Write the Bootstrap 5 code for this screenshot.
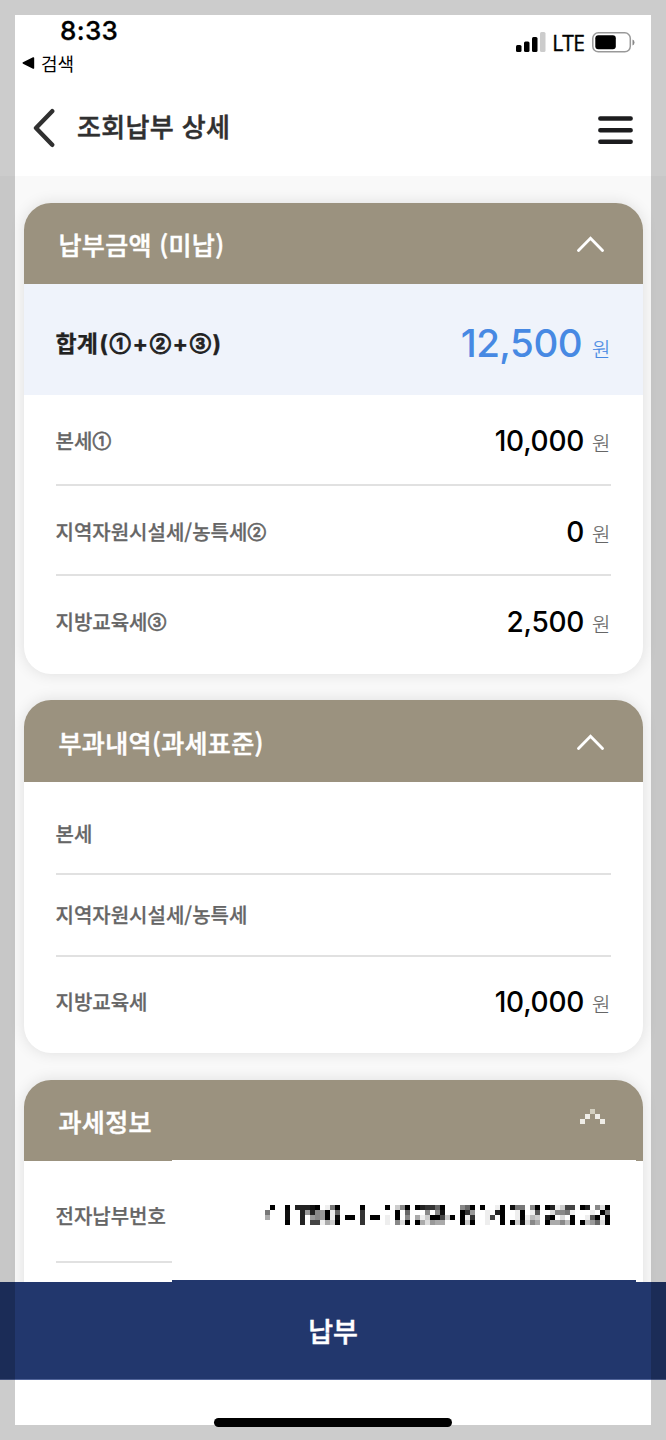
<!DOCTYPE html>
<html lang="ko">
<head>
<meta charset="utf-8">
<meta name="viewport" content="width=device-width, initial-scale=1">
<title>조회납부 상세</title>
<link href="https://cdn.jsdelivr.net/npm/bootstrap@5.3.0/dist/css/bootstrap.min.css" rel="stylesheet">
<style>
body{font-family:Inter,"Noto Sans CJK KR",sans-serif;background:#fff;color:#000;line-height:1}
.ko{font-family:"Noto Sans CJK KR",sans-serif}
.phone{width:666px;height:1440px}
.frame-edge{inset:0;border:15px solid rgba(0,0,0,.2);z-index:5;pointer-events:none}
.status{height:78px;padding:0 31px 0 22px}
.clock{font-size:26px;font-weight:500;letter-spacing:.35px;padding:18px 0 0 38px;line-height:26px;-webkit-text-stroke:.3px}
.back-app{font-size:18px;line-height:20px;padding-top:9px;gap:6px}
.signal{padding-top:32px}
.lte{font-size:21px;line-height:22px;letter-spacing:-.8px;font-family:"Open Sans",sans-serif;font-weight:500;-webkit-text-stroke:.4px;margin-left:6px}
.titlebar{height:98px;padding:2px 33px 0 33px}
.titlebar h1{font-size:26px;font-weight:500;color:#303030;line-height:30px;margin:0;padding:0 0 4px 22px;letter-spacing:.35px;-webkit-text-stroke:.5px}
.content-area{height:1106px;background:#f9f9f9;padding:26.5px 23.5px 0;overflow:hidden}
.tax-card{border:0;border-radius:27px;box-shadow:0 0 15px rgba(0,0,0,.11);margin-bottom:26.5px;background:#fff}
.tax-head{height:81.5px;background:#9b927f;color:#fff;border-radius:27px 27px 0 0;padding:1px 39px 0 35px}
.tax-head h2{font-size:25px;font-weight:500;line-height:30px;margin:0;letter-spacing:.35px;-webkit-text-stroke:.5px}
.sum-row{height:111px;background:#eff3fb;padding:7px 32px 0 32px}
.sum-row .label-txt{font-size:23px;font-weight:700;color:#222}
.sum-row .amount{font-size:38.5px;font-weight:500;color:#4789e3;letter-spacing:-.5px}
.sum-row .unit{color:#4789e3;margin-left:10px}
.rows{padding:0 32px 6px}
.line-row{height:90.3px;border-bottom:2px solid #e1e1e1}
.line-row:last-child{border-bottom:0}
.first-card .rows{padding-bottom:7.3px}
.first-card .line-row{padding-top:3px}
.first-card .line-row:first-child{height:91px}
.first-card .line-row:last-child{padding-top:1px}
.short-row{height:81.5px}
.pay-no{height:93.5px;padding-top:3px}
.label-txt{font-size:20px;font-weight:500;color:#666;line-height:26px;-webkit-text-stroke:.25px}
.formula{font-family:Inter,sans-serif;margin-left:1.5px}
.circled{font-family:Inter,sans-serif;font-size:13px;font-weight:600;line-height:0;vertical-align:2.8px;margin-left:.5px;-webkit-text-stroke:.6px}
.formula .circled{font-size:15px;font-weight:700;vertical-align:3px;margin:0 1.8px;-webkit-text-stroke:.8px}
.amount{font-size:28px;font-weight:500;letter-spacing:-.25px;line-height:1}
.unit{font-size:20px;font-weight:300;color:#666;margin-left:8px;-webkit-text-stroke:.2px}
.masked{left:148.5px;top:80px;width:464px;height:122px;background:#fff}
.masked svg{position:absolute;left:93px;top:45px}
.pay{height:98px;background:#22376d;color:#fff;font-size:27px;font-weight:500;border:0;border-radius:0;border-bottom:1px solid #52659a;padding:2px 0 0;-webkit-text-stroke:.5px}
.pay-lip{left:172px;top:-2px;width:464px;height:2px;background:#22376d}
.home-bar{width:238px;height:9px;border-radius:5px;background:#000;margin-top:37.5px}
</style>
</head>
<body>
<main class="phone position-relative overflow-hidden d-flex flex-column">
  <div class="status d-flex justify-content-between">
    <div>
      <div class="clock">8:33</div>
      <div class="back-app ko d-flex align-items-center">
        <svg width="13" height="12" viewBox="0 0 13 12"><path d="M1 5.3 11 .3q1.2-.4 1.2.8v9.8q0 1.2-1.2.8L1 6.7Q0 6 1 5.3z"/></svg>
        <span>검색</span>
      </div>
    </div>
    <div class="signal d-flex align-items-start">
      <svg width="30" height="21" viewBox="0 0 30 21"><rect x="0" y="13" width="5.5" height="7" rx="1.5"/><rect x="8" y="9.5" width="5.5" height="10.5" rx="1.5"/><rect x="16" y="5" width="5.5" height="15" rx="1.5"/><rect x="24" y="0" width="5.5" height="20" rx="1.5" fill="#ccc"/></svg>
      <span class="lte">LTE</span>
      <svg class="ms-2" width="43" height="21" viewBox="0 0 43 21"><rect x=".8" y=".8" width="37.5" height="19" rx="5.5" fill="none" stroke="#999" stroke-width="1.5"/><rect x="3.3" y="3.3" width="20.5" height="14" rx="3"/><path d="M40.5 7.5q2 .7 2 3t-2 3z" fill="#888"/></svg>
    </div>
  </div>
  <header class="titlebar d-flex justify-content-between align-items-center">
    <div class="d-flex align-items-center">
      <svg width="22" height="40" viewBox="0 0 22 40"><path d="M19.2 3.2 3 20l16.2 16.8" fill="none" stroke="#303030" stroke-width="4.4" stroke-linecap="round" stroke-linejoin="round"/></svg>
      <h1 class="ko">조회납부 상세</h1>
    </div>
    <svg class="mt-1" width="35" height="29" viewBox="0 0 35 29"><path d="M2.3 2.5h30.4M2.3 14.2h30.4M2.3 25.8h30.4" stroke="#1c1c1e" stroke-width="4.4" stroke-linecap="round"/></svg>
  </header>

  <div class="content-area">
    <section class="card tax-card first-card">
      <div class="tax-head d-flex justify-content-between align-items-center">
        <h2 class="ko">납부금액 (미납)</h2>
        <svg width="27" height="16" viewBox="0 0 27 16"><path d="M1.5 14.5 13.5 2.2l12 12.3" fill="none" stroke="#fff" stroke-width="2.8" stroke-linecap="round"/></svg>
      </div>
      <div class="sum-row d-flex justify-content-between align-items-center">
        <span class="label-txt ko">합계<span class="formula">(<span class="circled">①</span>+<span class="circled">②</span>+<span class="circled">③</span>)</span></span>
        <span class="d-flex align-items-baseline"><span class="amount">12,500</span><span class="unit ko">원</span></span>
      </div>
      <div class="rows">
        <div class="line-row d-flex justify-content-between align-items-center"><span class="label-txt ko">본세<span class="circled">①</span></span><span class="d-flex align-items-baseline"><span class="amount">10,000</span><span class="unit ko">원</span></span></div>
        <div class="line-row d-flex justify-content-between align-items-center"><span class="label-txt ko">지역자원시설세/농특세<span class="circled">②</span></span><span class="d-flex align-items-baseline"><span class="amount">0</span><span class="unit ko">원</span></span></div>
        <div class="line-row d-flex justify-content-between align-items-center"><span class="label-txt ko">지방교육세<span class="circled">③</span></span><span class="d-flex align-items-baseline"><span class="amount">2,500</span><span class="unit ko">원</span></span></div>
      </div>
    </section>

    <section class="card tax-card">
      <div class="tax-head d-flex justify-content-between align-items-center">
        <h2 class="ko">부과내역(과세표준)</h2>
        <svg width="27" height="16" viewBox="0 0 27 16"><path d="M1.5 14.5 13.5 2.2l12 12.3" fill="none" stroke="#fff" stroke-width="2.8" stroke-linecap="round"/></svg>
      </div>
      <div class="rows pt-2">
        <div class="line-row short-row d-flex align-items-center mt-1"><span class="label-txt ko">본세</span></div>
        <div class="line-row short-row d-flex align-items-center"><span class="label-txt ko">지역자원시설세/농특세</span></div>
        <div class="line-row d-flex justify-content-between align-items-center"><span class="label-txt ko">지방교육세</span><span class="d-flex align-items-baseline"><span class="amount">10,000</span><span class="unit ko">원</span></span></div>
      </div>
    </section>

    <section class="card tax-card">
      <div class="tax-head d-flex justify-content-between align-items-center">
        <h2 class="ko">과세정보</h2>
        <svg width="24" height="15" viewBox="0 0 24 15" class="mb-2 overflow-visible" shape-rendering="crispEdges" fill="#efede7"><path d="M0 10h5v5H0zM5 5h5v5H5zM15 5h5v5h-5zM20 10h5v5h-5z"/><path d="M10 0h5v5h-5z" fill="#d3cfc0"/></svg>
      </div>
      <div class="rows pt-2">
        <div class="line-row pay-no d-flex align-items-center"><span class="label-txt ko">전자납부번호</span></div>
        <div class="line-row"></div>
      </div>
      <div class="masked position-absolute"><svg id="mosaic" width="345" height="20" viewBox="0 0 69 4" shape-rendering="crispEdges"></svg></div>
    </section>
  </div>

  <div class="position-relative">
    <div class="pay-lip position-absolute"></div>
    <button class="btn pay ko w-100 d-flex justify-content-center align-items-center" type="button">납부</button>
  </div>
  <div class="home-bar mx-auto"></div>
  <div class="frame-edge position-absolute"></div>
</main>
<script src="https://cdn.jsdelivr.net/npm/bootstrap@5.3.0/dist/js/bootstrap.bundle.min.js"></script>
<script>
// Masking mosaic: one string per column, one hex grey level per cell from top to bottom.
const columns = ("f7af 0fff ffff ffff 0110 ffff 2fff 2222 29ff 1294 0884 f99e e00a 7eec 0610 ffff ff0f ff0f ffff 0333 ffff ff0f ff0f ffff " +
  "0fee ffff c008 8ffd 0680 ffff 0fa0 2fea 38cd 3f09 680a 014a ffcf ff0f ffff 8000 63ec 0930 ffff 0fff feee ff4f e2ff 0000 ffff " +
  "1ff0 7eec 7001 ffed 8eb8 05ca ffff 0f20 2d0a e8fa c8d8 47fb 4e00 ffff 0ff0 2feb fe59 8f06 d0ed 0700").split(" ");
const mosaic = document.getElementById("mosaic");
columns.forEach((col, x) => [...col].forEach((v, y) => {
  if (v === "f") return;
  const r = document.createElementNS("http://www.w3.org/2000/svg", "rect");
  r.setAttribute("x", x); r.setAttribute("y", y);
  r.setAttribute("width", 1); r.setAttribute("height", 1);
  r.setAttribute("fill", "#" + v + v + v);
  mosaic.appendChild(r);
}));
</script>
</body>
</html>
